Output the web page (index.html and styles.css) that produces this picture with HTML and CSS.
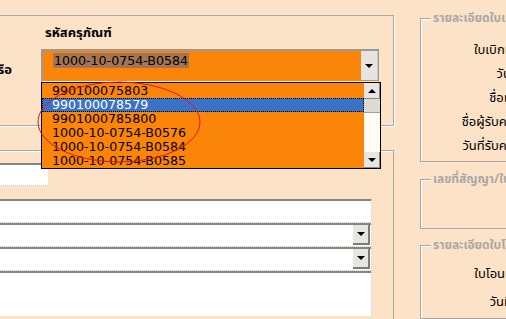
FILE: index.html
```html
<!DOCTYPE html>
<html lang="th">
<head>
<meta charset="UTF-8" />
<title>เบิกครุภัณฑ์</title>
<link rel="stylesheet" href="styles.css">
</head>
<body>

<div class="screen">
  <div class="left">
    <div class="group-code">
      <div class="code-label">รหัสครุภัณฑ์</div>
      <div class="or-label">หรือ</div>
      <div class="combo">
        <span class="combo-value">1000-10-0754-B0584</span>
        <span class="combo-btn"><i class="arrow-down"></i></span>
      </div>
    </div>

    <div class="group-detail">
      <div class="field small"></div>
      <div class="panel">
        <div class="row"></div>
        <div class="row"><span class="row-btn"><i class="arrow-down"></i></span></div>
        <div class="row"><span class="row-btn"><i class="arrow-down"></i></span></div>
        <div class="row last"></div>
      </div>
    </div>
  </div>

  <div class="right">
    <div class="rgroup g1">
      <span class="rgroup-title">รายละเอียดใบเบิก</span>
      <div class="labels">
        <div>ใบเบิกเลขที่ ฯ</div>
        <div>วันเบิกใช้</div>
        <div>ชื่อเจ้าของ</div>
        <div>ชื่อผู้รับครุภัณฑ์</div>
        <div>วันที่รับครุภัณฑ์</div>
      </div>
    </div>
    <div class="rgroup g2">
      <span class="rgroup-title">เลขที่สัญญา/ใบสั่งซื้อ</span>
    </div>
    <div class="rgroup g3">
      <span class="rgroup-title">รายละเอียดใบโอน</span>
      <div class="labels transfer">
        <div>ใบโอนเลขที่ฯ</div>
        <div>วันที่โอนฯ</div>
      </div>
    </div>
  </div>

  <!-- รายการของ combo ที่เปิดอยู่ -->
  <div class="dropdown">
    <ul class="items">
      <li>990100075803</li>
      <li class="selected">990100078579</li>
      <li>9901000785800</li>
      <li>1000-10-0754-B0576</li>
      <li>1000-10-0754-B0584</li>
      <li>1000-10-0754-B0585</li>
    </ul>
    <div class="scrollbar">
      <span class="sb-btn"><i class="arrow-up"></i></span>
      <span class="sb-thumb"></span>
      <span class="sb-track"></span>
      <span class="sb-btn"><i class="arrow-down"></i></span>
    </div>
  </div>

  <svg class="mark" width="506" height="319" viewBox="0 0 506 319">
    <ellipse cx="119" cy="122" rx="81" ry="40" fill="none" stroke="#e4141c" stroke-width="1" />
  </svg>
</div>

</body>
</html>
```

FILE: styles.css
```css
body {
  margin: 0;
  padding: 0;
  background: #fce2c6;
}
.screen {
  position: relative;
  width: 506px;
  height: 319px;
  overflow: hidden;
  display: flex;
  background: #fce2c6;
  font-family: Tahoma, "Noto Sans Thai", "DejaVu Sans", sans-serif;
  font-size: 13px;
  color: #000;
}
.left {
  flex: none;
  width: 414px;
  margin-left: -20px;
  display: flex;
  flex-direction: column;
}
.right {
  flex: none;
  width: 160px;
  margin-left: 26px;
  display: flex;
  flex-direction: column;
}

/* กล่องรหัสครุภัณฑ์ */
.group-code {
  box-sizing: border-box;
  margin-top: 15px;
  height: 111px;
  border: 1px solid #a8a8a8;
  border-left: none;
  box-shadow: 1px 1px 0 #fff;
  display: grid;
  grid-template-columns: 61px 338px;
  grid-template-rows: 33px 33px;
}
.code-label {
  grid-column: 2;
  grid-row: 1;
  align-self: center;
  padding-left: 4px;
  font-weight: bold;
  font-size: 13px;
}
.or-label {
  grid-column: 1;
  grid-row: 2;
  justify-self: end;
  align-self: center;
  margin-right: 29px;
  margin-top: 9px;
  font-weight: bold;
}
.combo {
  grid-column: 2;
  grid-row: 2;
  box-sizing: border-box;
  height: 33px;
  display: flex;
  justify-content: space-between;
  background: #fb8508;
  border: 2px solid #999;
  border-right-width: 1px;
  border-bottom: 1px solid #f4f4f4;
}
.combo-value {
  align-self: flex-start;
  margin: 2px 0 0 10px;
  padding: 0 1px;
  height: 15px;
  line-height: 15px;
  background: #a37553;
  font-family: "DejaVu Sans", sans-serif;
  font-size: 12.6px;
}
.combo-btn {
  width: 16px;
  height: 29px;
  background: #e6e4e0;
  border-right: 1px solid #c8c8c8;
  display: flex;
  align-items: center;
  justify-content: center;
}
.arrow-down {
  width: 0;
  height: 0;
  border-left: 4px solid transparent;
  border-right: 4px solid transparent;
  border-top: 4px solid #000;
}
.arrow-up {
  width: 0;
  height: 0;
  border-left: 4px solid transparent;
  border-right: 4px solid transparent;
  border-bottom: 4px solid #000;
}

/* กล่องรายละเอียดด้านล่าง */
.group-detail {
  flex: 1;
  margin-top: 24px;
  border-top: 1px solid #a8a8a8;
  border-right: 1px solid #a8a8a8;
  box-shadow: inset 0 1px 0 #fff;
}
.field {
  box-sizing: border-box;
  background: #fff;
  border-top: 2px solid #86867a;
  border-bottom: 1px dotted #c4c4c4;
}
.field.small {
  width: 68px;
  height: 23px;
  margin-top: 12px;
}
.panel {
  box-sizing: border-box;
  width: 392px;
  height: 118px;
  margin-top: 13px;
  background: #fff;
  border-right: 1px dotted #f0b8b8;
  border-bottom: 1px dotted #f0c890;
}
.row {
  box-sizing: border-box;
  height: 24px;
  border-top: 2px solid #86867a;
  border-bottom: 1px dotted #c4c4c4;
  display: flex;
  justify-content: flex-end;
}
.row.last {
  border-bottom: none;
}
.row-btn {
  box-sizing: border-box;
  width: 17px;
  height: 20px;
  margin-right: 1px;
  background: #e8e6e2;
  border-right: 2px solid #7c7c70;
  border-bottom: 2px solid #7c7c70;
  display: flex;
  align-items: center;
  justify-content: center;
}

/* กลุ่มด้านขวา */
.rgroup {
  position: relative;
  box-sizing: border-box;
  border: 1px solid #a8a8a8;
  border-right: none;
  box-shadow: inset 1px 1px 0 #fff;
}
.rgroup-title {
  position: absolute;
  top: -8px;
  left: 10px;
  padding: 0 2px;
  background: #fce2c6;
  color: #a8a8a8;
  font-size: 12px;
  font-weight: bold;
  line-height: 15px;
  white-space: nowrap;
}
.g1 {
  margin-top: 18px;
  height: 148px;
  padding-top: 19px;
}
.g2 {
  margin-top: 17px;
  height: 51px;
}
.g3 {
  margin-top: 16px;
  flex: 1;
  padding-top: 16px;
}
.labels {
  width: 120px;
  text-align: right;
  white-space: nowrap;
}
.labels div {
  height: 24px;
  line-height: 24px;
}
.labels.transfer {
  width: 117px;
}
.labels.transfer div {
  margin-bottom: 4px;
}

/* dropdown list */
.dropdown {
  position: absolute;
  left: 41px;
  top: 82px;
  box-sizing: border-box;
  width: 340px;
  height: 87px;
  border: 1px solid #000;
  background: #fb8508;
  display: flex;
}
.items {
  flex: 1;
  list-style: none;
  margin: 0;
  padding: 1px 0 0;
  font-family: "DejaVu Sans", sans-serif;
  font-size: 12.6px;
}
.items li {
  box-sizing: border-box;
  height: 14px;
  line-height: 14px;
  padding-left: 10px;
}
.items li.selected {
  background: #3b72c6;
  color: #fff;
  outline: 1px dotted #000;
  outline-offset: -1px;
}
.scrollbar {
  width: 16px;
  display: flex;
  flex-direction: column;
}
.sb-btn {
  box-sizing: border-box;
  height: 16px;
  background: #e8e6e2;
  border-right: 1px solid #8a8a80;
  border-bottom: 1px solid #8a8a80;
  display: flex;
  align-items: center;
  justify-content: center;
}
.sb-thumb {
  height: 13px;
  background: #dcdad2;
  border-bottom: 1px solid #a0a098;
}
.sb-track {
  flex: 1;
  background: #fdfbf2;
}
.mark {
  position: absolute;
  left: 0;
  top: 0;
  pointer-events: none;
}
```
